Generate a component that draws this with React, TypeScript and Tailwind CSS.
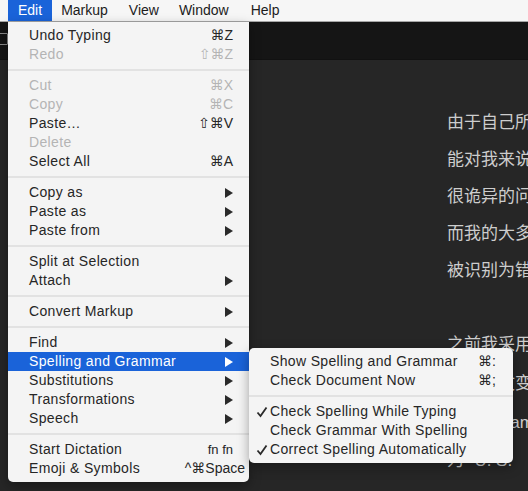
import React from "react";

type Item =
  | { sep: true }
  | {
      sep?: false;
      label: string;
      shortcut?: string;
      disabled?: boolean;
      arrow?: boolean;
      active?: boolean;
      check?: boolean;
      wide?: boolean;
    };

const editItems: Item[] = [
  { label: "Undo Typing", shortcut: "⌘Z" },
  { label: "Redo", shortcut: "⇧⌘Z", disabled: true },
  { sep: true },
  { label: "Cut", shortcut: "⌘X", disabled: true },
  { label: "Copy", shortcut: "⌘C", disabled: true },
  { label: "Paste…", shortcut: "⇧⌘V" },
  { label: "Delete", disabled: true },
  { label: "Select All", shortcut: "⌘A" },
  { sep: true },
  { label: "Copy as", arrow: true },
  { label: "Paste as", arrow: true },
  { label: "Paste from", arrow: true },
  { sep: true },
  { label: "Split at Selection" },
  { label: "Attach", arrow: true },
  { sep: true },
  { label: "Convert Markup", arrow: true },
  { sep: true },
  { label: "Find", arrow: true },
  { label: "Spelling and Grammar", arrow: true, active: true },
  { label: "Substitutions", arrow: true },
  { label: "Transformations", arrow: true },
  { label: "Speech", arrow: true },
  { sep: true },
  { label: "Start Dictation", shortcut: "fn fn" },
  { label: "Emoji & Symbols", shortcut: "^⌘Space", wide: true },
];

const subItems: Item[] = [
  { label: "Show Spelling and Grammar", shortcut: "⌘:" },
  { label: "Check Document Now", shortcut: "⌘;" },
  { sep: true },
  { label: "Check Spelling While Typing", check: true },
  { label: "Check Grammar With Spelling" },
  { label: "Correct Spelling Automatically", check: true },
];

function Arrow({ color }: { color: string }) {
  return (
    <svg width="8" height="10" viewBox="0 0 8 10" className="block">
      <polygon points="0,0 8,5 0,10" fill={color} />
    </svg>
  );
}

function Check() {
  return (
    <svg width="12" height="12" viewBox="0 0 12 12" className="block">
      <path d="M1.5 6.5 L4.5 10 L10.5 1.5" stroke="#2a2a2a" strokeWidth="1.8" fill="none" />
    </svg>
  );
}

function Menu({ items, sub }: { items: Item[]; sub?: boolean }) {
  return (
    <div className="py-[4px]">
      {items.map((it, i) => {
        if (it.sep) {
          return <div key={i} className="h-[2px] bg-[#e2e2e2] my-[5px]" />;
        }
        const color = it.active ? "text-white" : it.disabled ? "text-[#b4b4b4]" : "text-[#262626]";
        return (
          <div
            key={i}
            className={`flex h-[19px] items-center ${sub ? "pl-[7px] pr-[17px]" : "pl-[21px] pr-[16px]"} ${
              it.active ? "bg-[#1a63d9]" : ""
            } ${color}`}
          >
            {sub && <div className="w-[14px] flex items-center">{it.check && <Check />}</div>}
            <div className="flex-1 whitespace-nowrap tracking-[0.35px]">{it.label}</div>
            {it.shortcut && (
              <div
                className={`whitespace-nowrap ${it.wide ? "-mr-[12px]" : ""} ${
                  it.shortcut === "fn fn" ? "text-[13px]" : ""
                }`}
              >
                {it.shortcut}
              </div>
            )}
            {it.arrow && <Arrow color={it.active ? "#ffffff" : "#2a2a2a"} />}
          </div>
        );
      })}
    </div>
  );
}

const lines: { t: string; h: string }[] = [
  { t: "由于自己所使用的", h: "h-[37px]" },
  { t: "能对我来说是一", h: "h-[37px]" },
  { t: "很诡异的问题，", h: "h-[37px]" },
  { t: "而我的大多数", h: "h-[37px]" },
  { t: "被识别为错误", h: "h-[37px]" },
  { t: "", h: "h-[37px]" },
  { t: "之前我采用的", h: "h-[39px]" },
  { t: "会将英文变对", h: "h-[39px]" },
  { t: "用 Program", h: "h-[38px]" },
  { t: "为 “U. S.", h: "h-[38px]" },
];

export default function App() {
  return (
    <div
      className="relative w-[528px] h-[491px] overflow-hidden bg-[#262626] text-[14px]"
      style={{ fontFamily: '"Liberation Sans", "DejaVu Sans", "Noto Sans CJK SC", sans-serif' }}
    >
      {/* Menu bar */}
      <div className="flex h-[22px] items-stretch bg-[#f6f6f6] border-b border-[#a6a6a6] pl-[8px] text-[#1c1c1c]">
        <div className="flex items-center px-[10px] bg-[#1a63d9] text-white">Edit</div>
        <div className="flex items-center px-[10px] ml-[-1px]">Markup</div>
        <div className="flex items-center px-[10px] ml-[1px]">View</div>
        <div className="flex items-center px-[10px]">Window</div>
        <div className="flex items-center px-[10px] ml-[2px]">Help</div>
      </div>

      {/* Toolbar */}
      <div className="h-[38px] bg-[#151515] border-b border-[#111] flex items-start pt-[11px]">
        <div className="ml-[-4px] w-[12px] h-[12px] border border-[#8a8a8a] rounded-[1px]" />
      </div>

      {/* Editor text */}
      <div
        className="pl-[447px] pt-[50px] text-[#cdcdcd] text-[17px] whitespace-nowrap"
        style={{ fontFamily: '"Liberation Sans", "Noto Sans CJK SC", sans-serif' }}
      >
        {lines.map((l, i) => (
          <div key={i} className={`${l.h} leading-[26px]`}>
            {l.t || "\u00a0"}
          </div>
        ))}
      </div>

      {/* Edit menu */}
      <div className="absolute left-[8px] top-[22px] w-[241px] bg-[#f4f4f4] rounded-b-[5px] shadow-[0_4px_12px_rgba(0,0,0,0.35)]">
        <Menu items={editItems} />
      </div>

      {/* Submenu */}
      <div className="absolute left-[249px] top-[348px] w-[264px] bg-[#f4f4f4] rounded-[5px] shadow-[0_4px_12px_rgba(0,0,0,0.35)]">
        <Menu items={subItems} sub />
      </div>
    </div>
  );
}
